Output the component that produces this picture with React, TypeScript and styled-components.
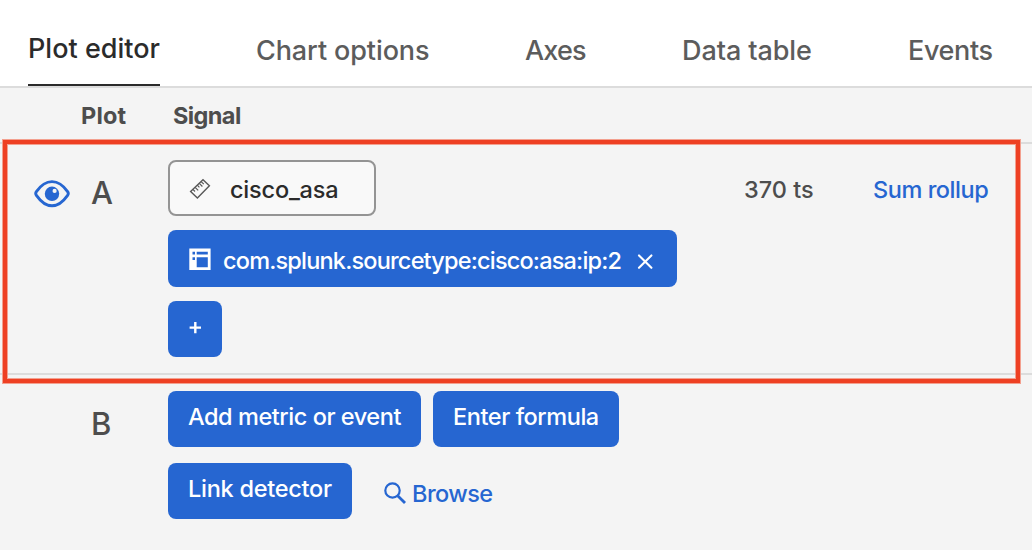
import React from "react";
import styled, { createGlobalStyle } from "styled-components";

const BLUE = "#2666d1";

const GlobalStyle = createGlobalStyle`
  *, *::before, *::after { box-sizing: border-box; }
  body {
    margin: 0;
    background: #f4f4f4;
    font-family: Inter, "Liberation Sans", sans-serif;
    font-weight: 450;
    color: #4d4d4d;
  }
  button { font-family: inherit; }
`;

const Page = styled.main`
  width: 1032px;
  height: 550px;
  overflow: hidden;
  background: #f4f4f4;
`;

const TabBar = styled.nav`
  display: flex;
  gap: 96px;
  height: 88px;
  padding-left: 28px;
  background: #fff;
  border-bottom: 2px solid #dcdcdc;
`;

const Tab = styled.button<{ $width: number; $active?: boolean; $spacing: number }>`
  flex: none;
  width: ${(p) => p.$width}px;
  height: 86px;
  padding: ${(p) => (p.$active ? "12px 0 0" : "16px 0 0")};
  border: 0;
  border-bottom: 2px solid ${(p) => (p.$active ? "#2b2b2b" : "transparent")};
  background: none;
  color: ${(p) => (p.$active ? "#2b2b2b" : "#5c5c5c")};
  font-size: 27px;
  font-weight: 450;
  letter-spacing: ${(p) => p.$spacing}px;
  text-align: left;
  white-space: nowrap;
`;

const HeaderRow = styled.div`
  display: grid;
  grid-template-columns: 92px 1fr;
  align-items: center;
  height: 56px;
  padding-left: 81px;
  border-bottom: 2px solid #dcdcdc;
  font-size: 23.5px;
  font-weight: 700;
`;

const HeaderCell = styled.span<{ $spacing: number }>`
  letter-spacing: ${(p) => p.$spacing}px;
`;

const PlotRow = styled.section<{ $height: number; $last?: boolean }>`
  position: relative;
  display: grid;
  grid-template-columns: 34px 57px 77px 1fr;
  align-items: start;
  height: ${(p) => p.$height}px;
  padding-top: 16px;
  border-bottom: ${(p) => (p.$last ? "0" : "2px solid #dcdcdc")};
`;

const Highlight = styled.div`
  position: absolute;
  top: -4px;
  left: 3px;
  width: 1017px;
  height: 243px;
  border: 4px solid #ee4023;
  box-shadow: 0 0 0 1px #f3a08f, inset 0 0 0 1px #f3a08f;
  pointer-events: none;
`;

const EyeIcon = styled.svg`
  grid-column: 2;
  width: 36px;
  height: 30px;
  margin-top: 19px;
`;

const Letter = styled.div`
  grid-column: 3;
  padding-top: 14px;
  font-size: 31px;
  line-height: 38px;
`;

const Signals = styled.div`
  grid-column: 4;
  display: flex;
  flex-direction: column;
  align-items: flex-start;
`;

const SignalLine = styled.div<{ $gap?: number; $mb?: number }>`
  display: flex;
  gap: ${(p) => p.$gap ?? 0}px;
  margin-bottom: ${(p) => p.$mb ?? 0}px;
`;

const MetricField = styled.div`
  display: flex;
  align-items: center;
  gap: 19px;
  width: 208px;
  height: 56px;
  padding: 2px 0 0 19px;
  border: 2px solid #949494;
  border-radius: 8px;
  background: #f9f9f9;
  color: #2b2b2b;
  font-size: 23.5px;
  letter-spacing: -0.2px;
`;

const SeriesCount = styled.span`
  width: 129px;
  margin-left: 368px;
  font-size: 23.5px;
  height: 56px;
  line-height: 60px;
`;

const Rollup = styled.a`
  color: ${BLUE};
  font-size: 23.5px;
  height: 56px;
  line-height: 60px;
  letter-spacing: -0.45px;
  white-space: nowrap;
`;

const FilterChip = styled.div`
  display: flex;
  align-items: center;
  width: 509px;
  height: 57px;
  padding: 4px 0 0 21px;
  border-radius: 8px;
  background: ${BLUE};
  color: #fff;
  font-size: 23.5px;
  font-weight: 500;
  letter-spacing: -0.81px;
  white-space: nowrap;
`;

const FilterIcon = styled.svg`
  width: 22px;
  height: 22px;
  margin-bottom: 3px;
`;

const ChipLabel = styled.span`
  width: 426px;
  padding-left: 12px;
`;

const Button = styled.button<{ $width: number; $spacing: number }>`
  width: ${(p) => p.$width}px;
  height: 56px;
  padding: 0 0 5px 20px;
  border: 0;
  border-radius: 8px;
  background: ${BLUE};
  color: #fff;
  font-size: 23.5px;
  font-weight: 500;
  letter-spacing: ${(p) => p.$spacing}px;
  text-align: left;
  white-space: nowrap;
`;

const AddButton = styled.button`
  display: flex;
  justify-content: center;
  width: 54px;
  height: 56px;
  padding: 21px 0 0;
  border: 0;
  border-radius: 8px;
  background: ${BLUE};
`;

const BrowseLink = styled.a`
  display: flex;
  align-items: center;
  gap: 6px;
  padding: 5px 0 0 20px;
  color: ${BLUE};
  font-size: 23.5px;
  letter-spacing: -0.55px;
`;

const SearchIcon = styled.svg`
  width: 22px;
  height: 22px;
  margin-bottom: 2px;
`;

export default function App() {
  return (
    <Page>
      <GlobalStyle />
      <TabBar>
        <Tab $active $width={132} $spacing={0.02}>Plot editor</Tab>
        <Tab $width={173} $spacing={-0.1}>Chart options</Tab>
        <Tab $width={61} $spacing={-0.8}>Axes</Tab>
        <Tab $width={130} $spacing={-0.08}>Data table</Tab>
        <Tab $width={86} $spacing={-0.35}>Events</Tab>
      </TabBar>
      <HeaderRow>
        <HeaderCell $spacing={0.15}>Plot</HeaderCell>
        <HeaderCell $spacing={-0.6}>Signal</HeaderCell>
      </HeaderRow>
      <PlotRow $height={231}>
        <EyeIcon viewBox="0 0 36 30" fill="none">
          <path
            d="M2.4 12.6C7 6 11.5 2.6 18 2.6S29 6 33.6 12.6C34.6 14 34.6 15 33.6 16.4C29 23 24.5 26.8 18 26.8S7 23 2.4 16.4C1.4 15 1.4 14 2.4 12.6Z"
            stroke={BLUE}
            strokeWidth="2.9"
            strokeLinejoin="round"
          />
          <circle cx="18" cy="14.8" r="7.2" fill={BLUE} />
          <circle cx="20.6" cy="11.9" r="2.1" fill="#f4f4f4" />
        </EyeIcon>
        <Letter>A</Letter>
        <Signals>
          <SignalLine $mb={14}>
            <MetricField>
              <svg width="22" height="22" viewBox="0 0 22 22" fill="none" stroke="#585858" strokeWidth="1.4">
                <path d="M1.6 13.4L14 1.8L20.4 7.8L8.4 20Z" />
                <path d="M3.9 11.4L6 13.5M6.1 9.3L9.2 12.4M8.3 7.2L10.4 9.3M10.3 5.4L13.4 8.5M12.2 3.6L14.8 6.2" strokeWidth="1.2" />
              </svg>
              <span>cisco_asa</span>
            </MetricField>
            <SeriesCount>370 ts</SeriesCount>
            <Rollup>Sum rollup</Rollup>
          </SignalLine>
          <SignalLine $mb={14}>
            <FilterChip>
              <FilterIcon viewBox="0 0 22 22">
                <path
                  fillRule="evenodd"
                  fill="#fff"
                  d="M0.3 0.5H21.6V22H0.3ZM3.5 3.8V6.4H6V3.8ZM7.7 3.8V6.4H18.8V3.8ZM3.5 9.3V12H6V9.3ZM7.7 9.3V19.2H18.8V9.3Z"
                />
              </FilterIcon>
              <ChipLabel>com.splunk.sourcetype:cisco:asa:ip:2</ChipLabel>
              <svg width="16" height="16" viewBox="0 0 16 16" stroke="#fff" strokeWidth="2.1" strokeLinecap="round">
                <path d="M2 2.4L14.4 14.8M14.4 2.4L2 14.8" />
              </svg>
            </FilterChip>
          </SignalLine>
          <AddButton aria-label="Add filter">
            <svg width="12" height="12" viewBox="0 0 12 12" stroke="#fff" strokeWidth="2.4">
              <path d="M6.3 0V11.2M0.6 5.6H12" />
            </svg>
          </AddButton>
        </Signals>
        <Highlight />
      </PlotRow>
      <PlotRow $height={175} $last>
        <Letter>B</Letter>
        <Signals>
          <SignalLine $gap={12} $mb={16}>
            <Button $width={253} $spacing={-0.45}>Add metric or event</Button>
            <Button $width={186} $spacing={-0.43}>Enter formula</Button>
          </SignalLine>
          <SignalLine $gap={12}>
            <Button $width={184} $spacing={-0.26}>Link detector</Button>
            <BrowseLink>
              <SearchIcon viewBox="0 0 22 22" fill="none" stroke={BLUE} strokeWidth="2.2">
                <circle cx="8.5" cy="8.5" r="7.2" />
                <path d="M13.7 13.7L21 21" strokeWidth="2.8" />
              </SearchIcon>
              <span>Browse</span>
            </BrowseLink>
          </SignalLine>
        </Signals>
      </PlotRow>
    </Page>
  );
}
